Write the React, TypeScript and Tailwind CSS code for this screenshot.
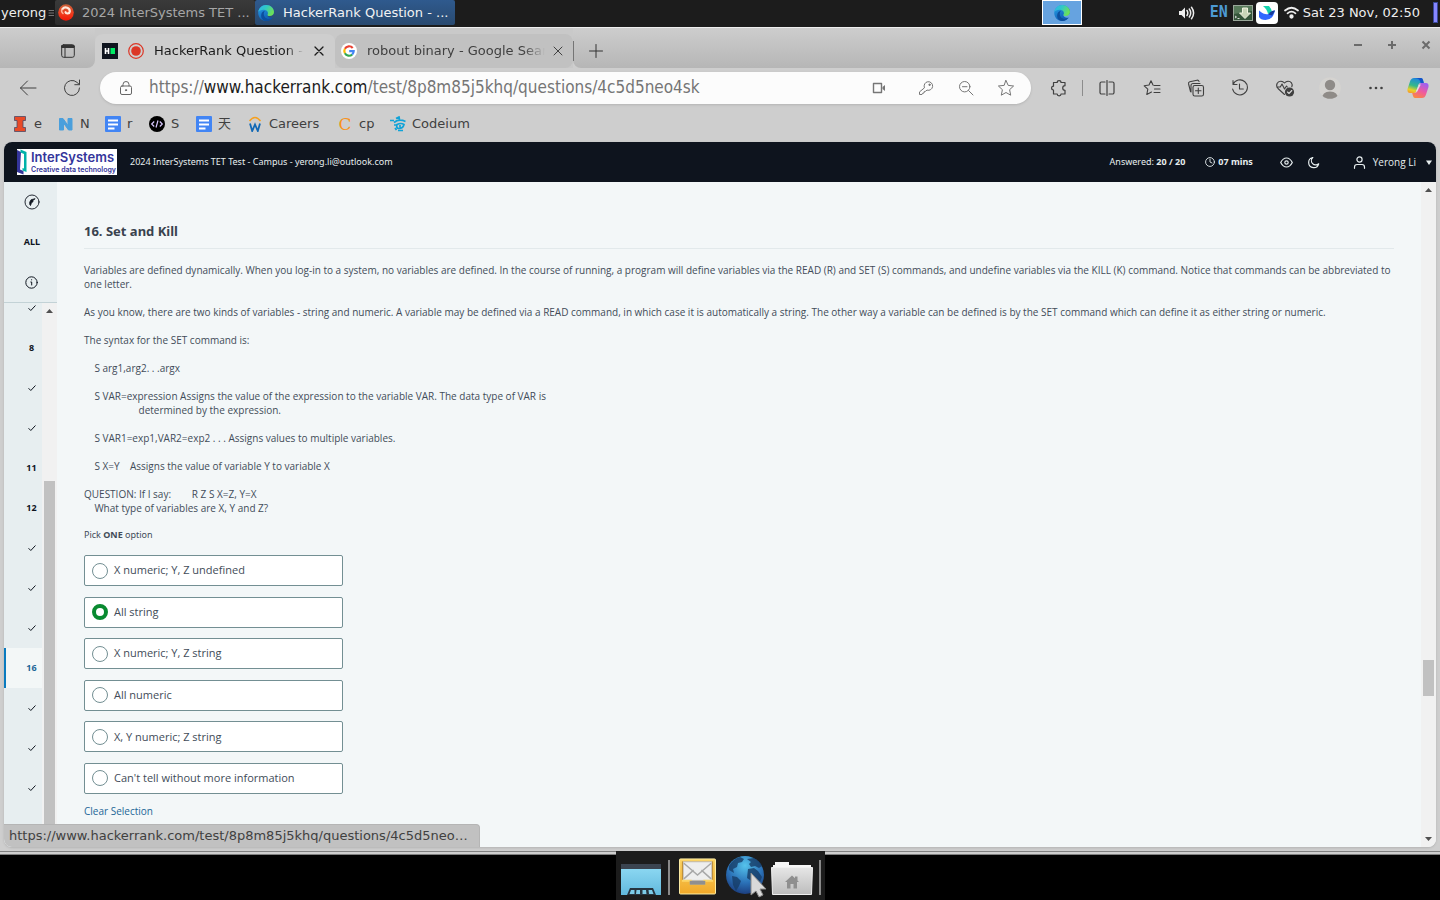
import type { ReactNode } from "react";
import { useState } from "react";

const chromeFont = "font-['DejaVu_Sans','Noto_Sans_CJK_SC',sans-serif]";
const pageFont = "font-['Open_Sans','Noto_Sans',sans-serif]";

type IconProps = { size?: number; className?: string; width?: number; children: ReactNode; box?: number };

function Icon({ size = 20, box = 20, width = 1, className = "", children }: IconProps) {
  return (
    <svg
      width={size}
      height={size}
      viewBox={`0 0 ${box} ${box}`}
      fill="none"
      stroke="currentColor"
      strokeWidth={width}
      strokeLinecap="round"
      strokeLinejoin="round"
      className={`shrink-0 ${className}`}
      aria-hidden="true"
    >
      {children}
    </svg>
  );
}

function EdgeLogo({ size = 16, id }: { size?: number; id: string }) {
  return (
    <svg width={size} height={size} viewBox="0 0 16 16" className="shrink-0" aria-hidden="true">
      <defs>
        <linearGradient id={`${id}a`} x1="0" y1="0" x2="1" y2="0.4">
          <stop offset="0" stopColor="#2fb4ee" />
          <stop offset="0.5" stopColor="#30c8c6" />
          <stop offset="1" stopColor="#6be05a" />
        </linearGradient>
        <linearGradient id={`${id}b`} x1="0" y1="0" x2="0.6" y2="1">
          <stop offset="0" stopColor="#2aa6ea" />
          <stop offset="1" stopColor="#0c56b0" />
        </linearGradient>
      </defs>
      <path d="M8 0A8 8 0 1 0 15 12.200C13 13.500 9 12.500 9.600 9.500C14 11.500 16 9.600 16 7C16 3 12.500 0 8 0Z" fill={`url(#${id}b)`} />
      <path d="M0.200 7C1 2.800 4 0 8.200 0C12.800 0 16 3.400 16 7C16 9.600 14 11 11.700 11C9.700 11 9 10.300 9.600 9.500C10.500 8.200 9.800 5.600 7 5C4 4.400 1.200 5.500 0.200 7Z" fill={`url(#${id}a)`} />
      <path d="M5.800 8.500C5.500 11.500 8 14 11 14C12.600 14 14 13.400 14.900 12.300C13.400 14.700 10.800 16 8 16C5 15.600 2.800 13.400 3.200 10C3.500 7.500 5 6.300 7 5.800C6.200 6.600 5.900 7.500 5.800 8.500Z" fill="#0d4f9e" />
    </svg>
  );
}

function CinnamonLogo() {
  return (
    <svg width="16" height="17" viewBox="0 0 16 17" className="shrink-0" aria-hidden="true">
      <defs>
        <linearGradient id="flame" x1="0" y1="0" x2="0" y2="1">
          <stop offset="0" stopColor="#c8623a" />
          <stop offset="0.6" stopColor="#f03a1c" />
          <stop offset="1" stopColor="#f01505" />
        </linearGradient>
      </defs>
      <ellipse cx="8" cy="8.500" rx="7.800" ry="8.200" fill="url(#flame)" />
      <path d="M4.500 5C7 2 12 4 11.800 7.500C11.500 10 8 10 7.500 8.200" fill="none" stroke="#ffe9dc" strokeWidth="2.200" strokeLinecap="round" />
      <path d="M3.800 5.500C3.300 7 3.800 8.500 5 9.500" fill="none" stroke="#ffb49a" strokeWidth="1.500" strokeLinecap="round" />
    </svg>
  );
}

function TopPanel() {
  return (
    <header className="flex h-[27px] shrink-0 items-center bg-[#1c1c1c] pb-0.5 text-[13px] text-[#eeeeee]">
      <button className="flex h-full w-[55px] items-center gap-0.5 pl-px">
        yerong
        <Icon size={6} box={6} className="text-[#8a8a8a]">
          <path d="M1 0.500h5M1 3h5M1 5.500h5" strokeWidth="0.800" />
        </Icon>
      </button>
      <button className="flex h-[25px] w-[200px] items-center gap-2 rounded-[2px] bg-linear-to-b from-[#3a3a3a] to-[#2c2c2c] pl-[3px] text-[#a6a6a6]">
        <CinnamonLogo />
        <span className="whitespace-nowrap">2024 InterSystems TET ...</span>
      </button>
      <button className="flex h-[25px] w-[200px] items-center gap-2 rounded-[2px] bg-linear-to-b from-[#2f5a8e] to-[#294a70] pl-[3px] text-[#f2f2f2]">
        <EdgeLogo id="tb" />
        <span className="ml-px whitespace-nowrap">HackerRank Question - ...</span>
      </button>
      <div className="flex h-full flex-1 items-center justify-end">
        <button aria-label="Workspace 1" className="mr-24 flex h-[25px] w-10 items-center justify-center border border-white bg-[#66a3e0]">
          <EdgeLogo id="ws" />
        </button>
        <button aria-label="Volume" className="mr-3.5">
          <Icon size={18} box={18} width={1.5}>
            <path d="M1 7h2.500L7 3.500v11L3.500 11H1z" fill="currentColor" stroke="none" />
            <path d="M9 6.500q1.600 2.500 0 5M11.300 5q2.800 4 0 8M13.500 3.300q4.200 5.700 0 11.400" />
          </Icon>
        </button>
        <span className="mr-[5px] font-['DejaVu_Sans_Mono',monospace] text-[15px] leading-none font-bold text-[#4c9ad4]">EN</span>
        <svg width="20" height="16" viewBox="0 0 20 16" className="mr-[3px]" aria-hidden="true">
          <rect x="0.500" y="0.500" width="19" height="15" fill="#35563a" stroke="#9aa79a" />
          <path d="M1 1h18v5L1 9z" fill="#577a5a" />
          <path d="M9.500 3h5v5h3L12 13.500L6.500 8h3z" fill="#c9d6b8" stroke="#eef2df" />
          <path d="M2 11l1.500 1L2 13M4.500 13.500h2" stroke="#dddddd" fill="none" />
        </svg>
        <svg width="22" height="22" viewBox="0 0 22 22" className="mr-1.5" aria-hidden="true">
          <rect width="22" height="22" rx="4" fill="#ffffff" />
          <path d="M7 4h6q3 3 3 7l-4 1q-1-5-5-8z" fill="#14d3ad" />
          <path d="M3 8.500q6 5 9.500 3.500q3-3.500 6.500-3.500q-2 9.500-9.500 9.500q-5 0-6.500-3z" fill="#3068ff" />
          <path d="M12.500 12.500q3-4.500 6.500-4q-1.500 3-3 5z" fill="#163b96" />
        </svg>
        <Icon size={15} box={15} width={1.7} className="mr-1">
          <path d="M1 5.500q6.500-5.500 13 0M3.500 8.300q4-3.400 8 0" />
          <circle cx="7.500" cy="11.500" r="1.300" fill="currentColor" />
        </Icon>
        <time className="whitespace-nowrap">Sat 23 Nov, 02:50</time>
        <span className="ml-[13px] mr-0.5 h-[21px] w-[5px] border border-[#3a4a9a] bg-[#8787ff]" />
      </div>
    </header>
  );
}

function GoogleLogo() {
  return (
    <svg width="16" height="16" viewBox="0 0 16 16" className="shrink-0" aria-hidden="true">
      <circle cx="8" cy="8" r="8" fill="#ffffff" />
      <g fill="none" strokeWidth="2.200">
        <path d="M11.700 5A4.700 4.700 0 0 0 3.900 5.800" stroke="#ea4335" />
        <path d="M3.900 5.800A4.700 4.700 0 0 0 3.900 10.300" stroke="#fbbc05" />
        <path d="M3.900 10.300A4.700 4.700 0 0 0 11.200 11.500" stroke="#34a853" />
        <path d="M11.200 11.500A4.700 4.700 0 0 0 12.700 8.100H8.200" stroke="#4285f4" />
      </g>
    </svg>
  );
}

function TabStrip() {
  return (
    <div className="flex h-10 shrink-0 items-end bg-[#cecece]">
      <div className="flex h-full w-[95px] items-center justify-end rounded-br-lg bg-linear-to-b from-[#cdcdcd] to-[#b6b6b6] pr-5 pt-1.5">
        <button aria-label="Tab actions">
          <Icon size={14} box={14} className="text-[#333333]">
            <rect x="0.700" y="0.700" width="12.600" height="12.600" rx="2" />
            <path d="M0.700 2.500h12.600M4 3.500v9.500" />
            <path d="M1 1.500h12v2H1z" fill="currentColor" />
          </Icon>
        </button>
      </div>
      <div className="flex h-full w-[240px] flex-col bg-[#c9c9c9] pt-1.5">
        <div className="flex flex-1 items-center rounded-t-lg bg-[#cecece] pl-[7px]">
          <svg width="16" height="16" viewBox="0 0 16 16" aria-hidden="true">
            <rect width="16" height="16" fill="#0e141e" />
            <path d="M3.500 5v6M6.500 5v6M3.500 8h3" stroke="#ffffff" strokeWidth="1.600" fill="none" />
            <rect x="8.500" y="5" width="4.500" height="6" fill="#00ea64" />
          </svg>
          <svg width="16" height="16" viewBox="0 0 16 16" className="ml-2.5" aria-hidden="true">
            <circle cx="8" cy="8" r="7.300" fill="none" stroke="#dc3626" strokeWidth="1.200" />
            <circle cx="8" cy="8" r="4.800" fill="#dc3626" />
          </svg>
          <span className="ml-2.5 w-[150px] text-[13px] whitespace-nowrap text-[#1b1b1b] [mask-image:linear-gradient(to_right,black_88%,transparent)]">
            HackerRank Question -
          </span>
          <button aria-label="Close tab" className="ml-2.5">
            <Icon size={10} box={10} width={1.3} className="text-[#1b1b1b]">
              <path d="M1 1l8 8M9 1l-8 8" />
            </Icon>
          </button>
        </div>
      </div>
      <div className="flex h-full w-[238px] flex-col bg-[#c9c9c9] pt-1.5">
        <div className="flex flex-1 items-center rounded-lg bg-[#c1c1c1] pl-1.5">
          <GoogleLogo />
          <span className="ml-2.5 w-[178px] text-[13px] whitespace-nowrap text-[#404040] [mask-image:linear-gradient(to_right,black_88%,transparent)]">
            robout binary - Google Sear
          </span>
          <button aria-label="Close tab" className="ml-2">
            <Icon size={10} box={10} className="text-[#404040]">
              <path d="M1 1l8 8M9 1l-8 8" />
            </Icon>
          </button>
        </div>
      </div>
      <div className="flex h-full flex-1 items-center rounded-bl-lg bg-linear-to-b from-[#cdcdcd] to-[#b6b6b6] pt-1.5">
        <span className="h-5 w-px bg-[#757575]" />
        <button aria-label="New tab" className="ml-3.5">
          <Icon size={16} box={16} className="text-[#333333]">
            <path d="M1.500 8h13M8 1.500v13" />
          </Icon>
        </button>
        <div className="mb-3 ml-auto mr-[9px] flex gap-6 text-[#6b6b6b]">
          <button aria-label="Minimize">
            <Icon size={10} box={10} width={2}><path d="M1 5h8" strokeLinecap="butt" /></Icon>
          </button>
          <button aria-label="Maximize">
            <Icon size={10} box={10} width={2}><path d="M1 5h8M5 1v8" strokeLinecap="butt" /></Icon>
          </button>
          <button aria-label="Close window">
            <Icon size={10} box={10} width={2}><path d="M1.500 1.500l7 7M8.500 1.500l-7 7" strokeLinecap="butt" /></Icon>
          </button>
        </div>
      </div>
    </div>
  );
}

function ToolButton({ label, wide = "w-11", children }: { label: string; wide?: string; children: ReactNode }) {
  return (
    <button aria-label={label} className={`flex h-8 shrink-0 items-center justify-center ${wide}`}>
      {children}
    </button>
  );
}

function Toolbar() {
  return (
    <div className="flex h-10 shrink-0 items-center pr-[5px] pl-1.5 text-[#404040]">
      <ToolButton label="Back">
        <Icon><path d="M18 10H2.500M9.500 3L2.500 10l7 7" /></Icon>
      </ToolButton>
      <ToolButton label="Refresh">
        <Icon size={18} box={18}><path d="M16.500 9A7.500 7.500 0 1 1 14 3.400L16.300 5.500M16.500 1v4.700h-4.700" /></Icon>
      </ToolButton>
      <div className="ml-1.5 flex h-8 flex-1 items-center rounded-full bg-[#fcfcfc] pl-[19px] shadow-sm">
        <Icon size={14} box={14} className="text-[#666666]">
          <rect x="1.500" y="5" width="11" height="8.500" rx="1.500" />
          <path d="M4 5V3.500a3 3 0 0 1 6 0V5" />
          <circle cx="7" cy="9.200" r="0.600" fill="currentColor" />
        </Icon>
        <a href="#address" className="ml-4 flex-1 font-['DejaVu_Sans_Condensed','DejaVu_Sans',sans-serif] text-[17px] whitespace-nowrap text-[#757575]">
          https://<span className="text-[#1b1b1b]">www.hackerrank.com</span>/test/8p8m85j5khq/questions/4c5d5neo4sk
        </a>
        <div className="flex items-center text-[#767676]">
          <ToolButton label="Camera">
            <Icon size={14} box={14} width={1.4}>
              <path d="M1.500 2.500h8v9h-8z" />
              <path d="M10.500 6l2.500-2v6l-2.500-2z" fill="currentColor" stroke="none" />
            </Icon>
          </ToolButton>
          <ToolButton label="Passwords" wide="w-[50px]">
            <Icon size={16} box={16}>
              <path d="M6.300 7.500A4.300 4.300 0 1 1 9 10.100L7.500 11.300L6.300 11.500L6 13L4.500 13.300L4 14.500H1.500V12.300z" />
              <circle cx="11.500" cy="4.800" r="0.700" fill="currentColor" />
            </Icon>
          </ToolButton>
          <ToolButton label="Zoom out" wide="w-[30px]">
            <Icon size={16} box={16}>
              <circle cx="6.700" cy="6.700" r="5.200" />
              <path d="M4.500 6.700h4.500M10.500 10.500l4.500 4.500" />
            </Icon>
          </ToolButton>
          <ToolButton label="Add to favorites" wide="w-[50px]">
            <Icon size={18} box={18}>
              <path d="M9 1.500l2.200 4.900l5.400.6l-4 3.700l1.100 5.500L9 13.500L4.300 16.200l1.100-5.500L1.400 7l5.400-.6z" />
            </Icon>
          </ToolButton>
        </div>
      </div>
      <div className="flex items-center pl-[5px]">
        <ToolButton label="Extensions" wide="w-[46px]">
          <Icon size={18} box={18} width={1.2}>
            <path d="M3.500 3.500h3.700a1.900 1.900 0 0 1 3.800 0h4v3.200a2.200 2.200 0 0 0 0 4.600v3.700h-4a1.900 1.900 0 0 1-3.800 0H3.500V11a1.900 1.900 0 0 1 0-3.800z" />
          </Icon>
        </ToolButton>
        <span className="h-4 w-px bg-[#8c8c8c]" />
        <ToolButton label="Split screen" wide="w-12">
          <Icon size={16} box={16} width={1.2}>
            <path d="M6 2H2.500a1.500 1.500 0 0 0-1.500 1.500v9A1.500 1.500 0 0 0 2.500 14H6M10 2h3.500A1.500 1.500 0 0 1 15 3.500v9a1.500 1.500 0 0 1-1.500 1.500H10M8 0.500v15" />
          </Icon>
        </ToolButton>
        <ToolButton label="Favorites" wide="w-[42px]">
          <Icon size={18} box={18} width={1.1}>
            <path d="M10 6L8 1.800L6 6L1.200 6.800L4.800 10.200L3.800 15.500L8.500 13M11 6.500h6M11.500 10h5.500M11 13.500h6" />
          </Icon>
        </ToolButton>
        <ToolButton label="Collections" wide="w-[46px]">
          <Icon size={18} box={18} width={1.1}>
            <rect x="6" y="6.500" width="10.500" height="10.500" rx="1.800" />
            <path d="M11.300 9v5.500M8.500 11.800h5.500M3.500 12.500L1.600 5a1.800 1.800 0 0 1 1.200-2.200L10 1.200a1.800 1.800 0 0 1 2 1.200M4 13V6.500A2 2 0 0 1 6 4.500h7" />
          </Icon>
        </ToolButton>
        <ToolButton label="History" wide="w-[42px]">
          <Icon size={18} box={18} width={1.1}>
            <path d="M2 5.500A7.500 7.500 0 1 1 1.600 10M2 1.500v4h4M8.500 5v5h3.800" />
          </Icon>
        </ToolButton>
        <ToolButton label="Browser essentials" wide="w-12">
          <Icon size={20} box={20} width={1.1}>
            <path d="M9.500 16.500L3 10.500C0 7 2.500 3 6 3.200Q8 3.300 9.500 5Q11 3.300 13 3.200C16 3.100 18 6 16.800 8.800M1.800 9h3.500L7 6l2.500 5L11.500 8l.8 1" />
            <circle cx="14.500" cy="14" r="4.600" fill="currentColor" stroke="none" />
            <path d="M12.500 14l1.500 1.500l2.800-3" stroke="#d8d8d8" />
          </Icon>
        </ToolButton>
        <ToolButton label="Profile" wide="w-[42px]">
          <svg width="22" height="22" viewBox="0 0 22 22" aria-hidden="true">
            <defs><clipPath id="av"><circle cx="11" cy="11" r="10.800" /></clipPath></defs>
            <circle cx="11" cy="11" r="10.800" fill="#d5d3d0" />
            <g clipPath="url(#av)" fill="#8f8b87">
              <circle cx="11" cy="8" r="5.200" />
              <path d="M3 22q0-7.500 8-7.500t8 7.500z" />
            </g>
          </svg>
        </ToolButton>
        <ToolButton label="Settings and more" wide="w-[50px]">
          <Icon size={16} box={16}>
            <g fill="currentColor" stroke="none"><circle cx="2.500" cy="8" r="1.300" /><circle cx="8" cy="8" r="1.300" /><circle cx="13.500" cy="8" r="1.300" /></g>
          </Icon>
        </ToolButton>
        <ToolButton label="Copilot" wide="w-[34px]">
          <svg width="22" height="22" viewBox="0 0 22 22" aria-hidden="true">
            <defs>
              <linearGradient id="cpA" x1="0.500" y1="0" x2="0.200" y2="1"><stop offset="0" stopColor="#1e86e0" /><stop offset="0.500" stopColor="#35b98a" /><stop offset="0.800" stopColor="#e8d227" /><stop offset="1" stopColor="#f59a2a" /></linearGradient>
              <linearGradient id="cpB" x1="0.700" y1="0" x2="0.200" y2="1"><stop offset="0" stopColor="#9f5ff0" /><stop offset="0.500" stopColor="#ef5aa0" /><stop offset="1" stopColor="#fb8a3c" /></linearGradient>
            </defs>
            <path d="M7 1h7q1.500 0 2 2l.8 3h-3q-2 0-2.600 2L9.500 14q-.7 2-2.500 2H3q-3 0-2.500-4L3 4.500Q4 1 7 1z" fill="url(#cpA)" />
            <path d="M15 21H8q-1.500 0-2-2l-.8-3h2.500q2 0 2.600-2L12 8q.7-2 2.500-2h4.500q3 0 2.500 4L19 17.500Q18 21 15 21z" fill="url(#cpB)" />
            <path d="M7 1h7q1.500 0 2 2l.8 3h-3L13 4Q12 1 7 1z" fill="#1452c8" />
            <path d="M12.200 7.500L13.800 7.500L10.200 14.500H8.800z" fill="#e6dfe6" />
          </svg>
        </ToolButton>
      </div>
    </div>
  );
}

function DocIcon() {
  return (
    <svg width="16" height="16" viewBox="0 0 16 16" aria-hidden="true">
      <rect width="16" height="16" rx="1" fill="#4285f4" />
      <path d="M3 4.500h10M3 8.500h10M3 12.500h6.500" stroke="#ffffff" strokeWidth="2" />
    </svg>
  );
}

const bookmarks: { label: string; gap: string; icon: ReactNode }[] = [
  {
    label: "e", gap: "w-[46px]",
    icon: <svg width="16" height="16" viewBox="0 0 16 16" aria-hidden="true"><path d="M2.500 0.500h11v4h-2.500v7h2.500v4h-11v-4H5V4.500H2.500z" fill="#e84a27" stroke="#4d4a66" strokeWidth="0.800" /></svg>,
  },
  {
    label: "N", gap: "w-[47px]",
    icon: <svg width="16" height="16" viewBox="0 0 16 16" aria-hidden="true"><path d="M1.500 14V2.500H5l5 7v-7h4V14h-3.500L5.500 7v7z" fill="#4a9fdc" stroke="#4a9fdc" strokeWidth="1" /></svg>,
  },
  { label: "r", gap: "w-11", icon: <DocIcon /> },
  {
    label: "S", gap: "w-[47px]",
    icon: <svg width="16" height="16" viewBox="0 0 16 16" aria-hidden="true"><circle cx="8" cy="8" r="8" fill="#000000" /><path d="M5.200 5.500L2.700 8l2.500 2.500M10.800 5.500L13.300 8l-2.500 2.500M9 4.500L7 11.500" stroke="#d9c8ff" strokeWidth="1.200" fill="none" /></svg>,
  },
  { label: "天", gap: "w-[51px]", icon: <DocIcon /> },
  {
    label: "Careers", gap: "w-[90px]",
    icon: <svg width="16" height="16" viewBox="0 0 16 16" aria-hidden="true"><path d="M2.500 5Q8-2 13.500 5" stroke="#f7a01e" strokeWidth="1.500" fill="none" /><path d="M3 7.500l2.200 7.500l2.800-6.500l2.800 6.500l2.200-7.500" stroke="#1168b5" strokeWidth="1.800" fill="none" /></svg>,
  },
  {
    label: "cp", gap: "w-[53px]",
    icon: <span className="w-4 text-center font-['DejaVu_Serif',serif] text-[17px] leading-4 text-[#f7941d]" aria-hidden="true">C</span>,
  },
  {
    label: "Codeium", gap: "w-[90px]",
    icon: <svg width="16" height="16" viewBox="0 0 16 16" aria-hidden="true"><path d="M0 4.500h4M6 2.500l3-1.500l.5 2.500M4 6.500Q9 2.500 15.500 5.500M4 9h2.500M7 8.500q4-2 7 0q-1 4-5 4q-3 0-2-4zM8 14.500h5M5 12l1.500 2M10 9v2.500" stroke="#0fa3d8" strokeWidth="1.700" fill="none" /></svg>,
  },
];

function BookmarkBar() {
  return (
    <nav className="flex h-[34px] shrink-0 items-center pb-0.5 pl-3 text-[13px] text-[#404040]">
      {bookmarks.map((b) => (
        <a key={b.label} href="#bookmark" className={`flex items-center gap-1.5 whitespace-nowrap ${b.gap}`}>
          {b.icon}
          {b.label}
        </a>
      ))}
    </nav>
  );
}

function InterSystemsLogo() {
  return (
    <div className="flex h-[26px] w-[100px] shrink-0 items-center overflow-hidden bg-white text-[#34359b]">
      <svg width="14" height="26" viewBox="0 0 14 26" className="shrink-0" aria-hidden="true">
        <path d="M4 3L0 1v22L6.500 25.500V22L3 20.500z" fill="#34359b" />
        <path d="M3.500 0.500L9.500 3V23L5.500 21.500V19L7 19.500V5L3.500 3.500z" fill="#00b2a9" />
      </svg>
      <div className="flex flex-col whitespace-nowrap">
        <span className="font-['Inter','Liberation_Sans',sans-serif] text-[13px] leading-[15px] font-semibold">InterSystems</span>
        <span className="font-['Inter','Liberation_Sans',sans-serif] text-[7px] leading-[9px] font-semibold">Creative data technology</span>
      </div>
    </div>
  );
}

function TestHeader() {
  return (
    <header className="flex h-10 shrink-0 items-center bg-[#0e141e] pl-[13px] pr-1 text-[9px] text-[#e7eeef]">
      <InterSystemsLogo />
      <span className="ml-[13px] font-['Noto_Sans',sans-serif] whitespace-nowrap">2024 InterSystems TET Test - Campus - yerong.li@outlook.com</span>
      <div className="ml-auto flex items-center whitespace-nowrap">
        <span className="font-['Noto_Sans',sans-serif]">Answered: <b>20 / 20</b></span>
        <Icon size={10} box={10} width={0.9} className="ml-5">
          <circle cx="5" cy="5" r="4.400" /><path d="M5 2.200V5l2 1" />
        </Icon>
        <b className="ml-[3px] font-['Noto_Sans',sans-serif]">07 mins</b>
        <button aria-label="Toggle visibility" className="ml-[27px]">
          <Icon size={13} box={13} width={1.2}>
            <path d="M0.700 6.500Q3 2 6.500 2t5.800 4.500Q10 11 6.500 11T.7 6.500z" /><circle cx="6.500" cy="6.500" r="1.700" />
          </Icon>
        </button>
        <button aria-label="Dark mode" className="ml-3.5">
          <Icon size={13} box={13} width={1.2}>
            <path d="M5.800 1.500A5.100 5.100 0 1 0 11.700 7.800A4 4 0 0 1 5.800 1.500z" />
          </Icon>
        </button>
        <button className="ml-[33px] flex items-center text-[10px]">
          <Icon size={13} box={13} width={1.2}>
            <circle cx="6.500" cy="3.500" r="2.600" /><path d="M1.500 12.300V11Q1.500 8.500 4 8.500h5q2.500 0 2.500 2.500v1.300" />
          </Icon>
          <span className="ml-[7px]">Yerong Li</span>
          <svg width="6" height="5" viewBox="0 0 6 5" className="ml-2.5" aria-hidden="true"><path d="M0 0.500h6L3 5z" fill="currentColor" /></svg>
        </button>
      </div>
    </header>
  );
}

function Arrow({ down = false }: { down?: boolean }) {
  return (
    <svg width="7" height="4" viewBox="0 0 7 4" aria-hidden="true">
      <path d={down ? "M0 0h7L3.500 4z" : "M0 4h7L3.500 0z"} fill="#505050" />
    </svg>
  );
}

const questionRows = [7, 8, 9, 10, 11, 12, 13, 14, 15, 16, 17, 18, 19, 20];
const numbered = new Set([8, 11, 12, 16]);

function Sidebar() {
  return (
    <aside className="flex w-[53px] shrink-0 flex-col bg-[#e7eef0] text-[#0e141e]">
      <div className="flex flex-col border-b border-[#c3d2d6]">
        <button aria-label="Compass" className="flex h-10 items-center justify-center pl-[3px]">
          <Icon size={16} box={16} width={0.9}>
            <circle cx="8" cy="8" r="7" />
            <path d="M10.800 5L9 6L8.800 8L7.500 8.500L6.500 11.500L5.800 10.500V8L7 6z" fill="currentColor" />
          </Icon>
        </button>
        <button className="h-10 pl-[3px] font-['Noto_Sans',sans-serif] text-[9px] font-bold">ALL</button>
        <button aria-label="Information" className="flex h-10 items-center justify-center pl-0.5">
          <Icon size={13} box={13}>
            <circle cx="6.500" cy="6.500" r="5.700" /><path d="M5.800 6h.9v3M6.600 3.700v.2" />
          </Icon>
        </button>
      </div>
      <div className="flex min-h-0 flex-1">
        <nav className="flex-1 overflow-hidden">
          <ul className="-mt-[15px]">
            {questionRows.map((n) => (
              <li key={n}>
                <a
                  href={`#question-${n}`}
                  aria-label={`Question ${n}`}
                  className={`flex h-10 items-center justify-center font-['Noto_Sans',sans-serif] text-[9px] font-bold ${
                    n === 16 ? "border-l-2 border-[#097bbf] bg-[#f3f7f7] pl-[15px] text-[#1c6697]" : "pl-[17px]"
                  }`}
                >
                  {numbered.has(n) ? n : <Icon size={8} box={8}><path d="M0.800 4.500L2.800 6.500L7.200 1.800" /></Icon>}
                </a>
              </li>
            ))}
          </ul>
        </nav>
        <div className="flex w-[15px] flex-col items-center bg-[#f1f1f1] pt-1.5">
          <Arrow />
          <span className="mt-[168px] w-[11px] flex-1 bg-[#c1c1c1]" />
        </div>
      </div>
    </aside>
  );
}

const description = `Variables are defined dynamically. When you log-in to a system, no variables are defined. In the course of running, a program will define variables via the READ (R) and SET (S) commands, and undefine variables via the KILL (K) command. Notice that commands can be abbreviated to one letter.

As you know, there are two kinds of variables - string and numeric. A variable may be defined via a READ command, in which case it is automatically a string. The other way a variable can be defined is by the SET command which can define it as either string or numeric.

The syntax for the SET command is:

    S arg1,arg2. . .argx

    S VAR=expression Assigns the value of the expression to the variable VAR. The data type of VAR is
                     determined by the expression.

    S VAR1=exp1,VAR2=exp2 . . . Assigns values to multiple variables.

    S X=Y    Assigns the value of variable Y to variable X

QUESTION: If I say:        R Z S X=Z, Y=X
    What type of variables are X, Y and Z?`;

const options = [
  "X numeric; Y, Z undefined",
  "All string",
  "X numeric; Y, Z string",
  "All numeric",
  "X, Y numeric; Z string",
  "Can't tell without more information",
];

function Question() {
  const [choice, setChoice] = useState<number | null>(1);
  return (
    <main className="min-w-0 flex-1 overflow-hidden px-[27px] pt-[39px] text-[#424c58]">
      <h1 className="border-b border-[#e2e9eb] pb-[7px] font-['Noto_Sans',sans-serif] text-[13px] leading-5 font-bold text-[#39424e]">16. Set and Kill</h1>
      <p className="mt-3.5 text-[10px] leading-[14px] whitespace-pre-wrap">{description}</p>
      <fieldset className="mt-[13px]">
        <legend className="font-['Noto_Sans',sans-serif] text-[9px] leading-[14px]">Pick <b>ONE</b> option</legend>
        <div className="mt-[13px] flex h-[239px] w-[259px] flex-col justify-between">
          {options.map((o, i) => (
            <label key={o} className="flex h-[31px] items-center gap-1.5 rounded-[2px] border border-[#738f93] bg-white pl-[7px] text-[11px]">
              <input
                type="radio"
                name="answer"
                checked={choice === i}
                onChange={() => setChoice(i)}
                className="h-4 w-4 shrink-0 appearance-none rounded-full border border-[#738f93] bg-white checked:border-4 checked:border-[#098a30]"
              />
              {o}
            </label>
          ))}
        </div>
      </fieldset>
      <button onClick={() => setChoice(null)} className="mt-2.5 block text-[10px] leading-[14px] text-[#1c6697]">
        Clear Selection
      </button>
    </main>
  );
}

function Dock() {
  return (
    <footer className="relative flex h-[45px] shrink-0 justify-center bg-black">
      <div className="absolute -top-1 bottom-0 flex items-end bg-[#1c1c1c] pr-1 pl-[3px] pb-[5px]">
        <button aria-label="Show desktop">
          <svg width="44" height="40" viewBox="0 0 44 40" aria-hidden="true">
            <defs><linearGradient id="dk" x1="0" y1="0" x2="0" y2="1"><stop offset="0" stopColor="#92dcf5" /><stop offset="1" stopColor="#62b9dd" /></linearGradient></defs>
            <rect x="2" y="9" width="40" height="31" fill="url(#dk)" />
            <rect x="2" y="9" width="40" height="5" fill="#3b4450" />
            <path d="M11 33h23l3 7H8z" fill="#27333d" />
            <path d="M12 35h3.500v4h-5zM17.500 35h3.500v4h-4zM23.500 35h3.500l.5 4h-4zM29.500 35h3.500l1.500 4h-4.500z" fill="#7ccbe8" />
          </svg>
        </button>
        <span className="mx-[5px] h-[35px] w-0.5 bg-[#8a8a8a]" />
        <button aria-label="Mail" className="ml-1">
          <svg width="37" height="40" viewBox="0 0 38 40" aria-hidden="true">
            <defs><linearGradient id="ml" x1="0" y1="0" x2="0" y2="1"><stop offset="0" stopColor="#fbd568" /><stop offset="1" stopColor="#f0a828" /></linearGradient></defs>
            <rect x="0.500" y="3.500" width="37" height="36" rx="1" fill="url(#ml)" stroke="#fff0a8" />
            <rect x="3" y="6" width="32" height="20" fill="#c08a2a" />
            <rect x="4.500" y="6.500" width="29" height="19" fill="#eeeeee" stroke="#c8c8c8" />
            <path d="M5 24L15 15M33 24L23 15M5 8l14 12L33 8" stroke="#a8a8a8" strokeWidth="1.500" fill="none" />
            <path d="M3 26h9v3h14v-3h9" stroke="#fbd568" strokeWidth="2" fill="none" />
            <rect x="11" y="26" width="16" height="4" fill="#8f8f8f" />
          </svg>
        </button>
        <button aria-label="Web browser" className="ml-[9px] h-10">
          <svg width="42" height="43" viewBox="0 0 42 43" aria-hidden="true">
            <defs><radialGradient id="gl" cx="0.500" cy="0.250" r="0.750"><stop offset="0" stopColor="#55c3ec" /><stop offset="0.600" stopColor="#2b72b8" /><stop offset="1" stopColor="#1c3f80" /></radialGradient></defs>
            <circle cx="20" cy="20" r="19" fill="url(#gl)" />
            <path d="M4 11Q8 4 15 2l4 2l-2 3l-4 1l-1 4l-4 2l1 4L4 15zM7 21l5 1l4 4l-2 5l-3 5l-3-6zM22 4l7-1q6 3 8 8l-3 2l-4-2l-4 1l-2-3l2-2zM23 14l6-1l4 3l4 6l-2 5l-4 7l-3-7l-6-4z" fill="#173c66" opacity="0.800" />
            <path d="M26 18v22l5-4l3 6l4-2l-3-6h6z" fill="#d9d9d9" stroke="#8b8b8b" />
          </svg>
        </button>
        <button aria-label="Home folder" className="ml-1">
          <svg width="42" height="40" viewBox="0 0 42 40" aria-hidden="true">
            <defs><linearGradient id="fd" x1="0" y1="0" x2="0" y2="1"><stop offset="0" stopColor="#e6e6e6" /><stop offset="1" stopColor="#bcbcbc" /></linearGradient></defs>
            <path d="M4 7h14v3h22v6H2V10h2z" fill="#f6f6f6" />
            <path d="M0.500 12.500h41l-1 27h-39z" fill="url(#fd)" stroke="#f0f0f0" />
            <path d="M14 27l7-6.500l3 2.700V21.500h2.500v4L28 27h-2v6.500h-3.500V29h-3v4.500H16V27z" fill="#8f8f8f" />
          </svg>
        </button>
        <span className="ml-1.5 h-[35px] w-0.5 bg-[#8a8a8a]" />
      </div>
    </footer>
  );
}

export default function App() {
  return (
    <div className={`flex h-screen flex-col overflow-hidden bg-[#cecece] ${chromeFont}`}>
      <TopPanel />
      <section className="flex min-h-0 flex-1 flex-col border-t border-[#eeeeee]">
        <TabStrip />
        <Toolbar />
        <BookmarkBar />
        <div className="relative mx-1 flex min-h-0 flex-1 flex-col">
          <div className={`flex min-h-0 flex-1 flex-col overflow-hidden rounded-lg bg-[#f3f7f8] shadow-sm ${pageFont}`}>
            <TestHeader />
            <div className="flex min-h-0 flex-1">
              <Sidebar />
              <Question />
              <div className="flex w-[15px] flex-col items-center bg-[#f1f1f1] py-1.5">
                <Arrow />
                <span className="mt-[468px] h-9 w-[11px] bg-[#c1c1c1]" />
                <span className="mt-auto"><Arrow down /></span>
              </div>
            </div>
          </div>
          <div className="absolute bottom-0 left-0 flex h-[23px] w-[476px] items-center rounded-tr rounded-bl-lg border-t border-r border-[#b5b5b5] bg-[#c1c1c1] pl-[5px] text-[13px] whitespace-nowrap text-[#404040]">
            https://www.hackerrank.com/test/8p8m85j5khq/questions/4c5d5neo…
          </div>
        </div>
        <div className="mt-1 h-1 shrink-0 border-y border-[#808080]" />
      </section>
      <Dock />
    </div>
  );
}
